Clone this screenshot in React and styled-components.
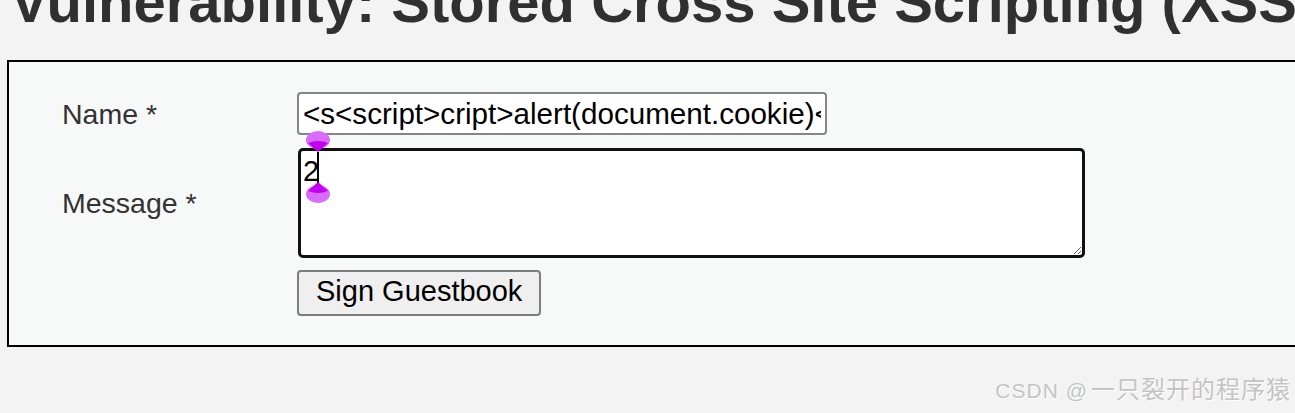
import React from 'react';
import styled, { createGlobalStyle } from 'styled-components';

const GlobalStyle = createGlobalStyle`
html, body {
  margin: 0;
  padding: 0;
  overflow: hidden;
  background-color: #f3f3f3;
  font-family: "Liberation Sans", Arial, sans-serif;
}
`;

const Page = styled.div`
width: 1295px;
height: 413px;
position: relative;
overflow: hidden;
`;

const Title = styled.h1`
margin: -32px 0 0 10px;
font-size: 58px;
font-weight: bold;
line-height: normal;
color: #303030;
white-space: nowrap;
`;

const Panel = styled.div`
width: 1400px;
margin: 25px 0 0 7px;
padding: 30px 0 29px 53px;
border: 2px solid #000;
background-color: #f7f8f8;
display: grid;
grid-template-columns: 235px auto;
row-gap: 12px;
align-items: center;
justify-items: start;
`;

const Label = styled.label`
font-size: 28.5px;
color: #333;
`;

const NameInput = styled.input`
box-sizing: border-box;
width: 530px;
height: 43px;
margin-bottom: 1px;
padding: 0 4px;
border: 2px solid #858585;
border-radius: 4px;
background: #fff;
font-family: "Liberation Sans", Arial, sans-serif;
font-size: 29.6px;
color: #000;
outline: none;
`;

const AreaWrap = styled.div`
position: relative;
margin-left: 1px;
`;

const MessageArea = styled.textarea`
box-sizing: border-box;
display: block;
width: 787px;
height: 110px;
padding: 4px 2px;
border: 3px solid #111;
border-radius: 5px;
background: #fff;
font-family: "Liberation Sans", Arial, sans-serif;
font-size: 29px;
color: #000;
outline: none;
resize: both;
`;

const Caret = styled.div`
position: absolute;
left: 19px;
top: 4px;
width: 2px;
height: 33px;
background: #000;
`;

const Handle = styled.svg`
position: absolute;
left: 8px;
top: ${props => props.top}px;
`;

const Spacer = styled.div``;

const SignButton = styled.button`
box-sizing: border-box;
height: 46px;
padding: 3px 17px 6px;
border: 2px solid #7d7d7d;
border-radius: 4px;
background-color: #efefef;
font-family: "Liberation Sans", Arial, sans-serif;
font-size: 29px;
color: #000;
`;

const Watermark = styled.div`
position: absolute;
right: 4px;
bottom: 8px;
color: #c4c4c4;
text-shadow: 1px 1px 0 rgba(255, 255, 255, 0.9);
white-space: nowrap;
`;

const MarkLatin = styled.span`
font-family: "Liberation Sans", Arial, sans-serif;
font-size: 21px;
letter-spacing: 1px;
margin-right: 3px;
`;

const MarkCjk = styled.span`
font-family: "Noto Sans CJK SC", sans-serif;
font-size: 24px;
letter-spacing: 1px;
`;

const SelectionHandle = ({ top, up }) => (
  <Handle top={top} width="24" height="21" viewBox="0 0 24 21">
    {up
      ? (
        <>
          <ellipse cx="12" cy="12" rx="12" ry="9" fill="#d96bff" />
          <path d="M12 0 L22 9 Q12 13 2 9 Z" fill="#c400f0" />
        </>
      )
      : (
        <>
          <ellipse cx="12" cy="9" rx="12" ry="9" fill="#d96bff" />
          <path d="M2 12 Q12 8 22 12 L12 21 Z" fill="#c400f0" />
        </>
      )}
  </Handle>
);

const App = () => (
  <Page>
    <GlobalStyle />
    <Title>Vulnerability: Stored Cross Site Scripting (XSS)</Title>
    <Panel>
      <Label>Name *</Label>
      <NameInput defaultValue="<s<script>cript>alert(document.cookie)</script>" />
      <Label>Message *</Label>
      <AreaWrap>
        <MessageArea defaultValue="2" />
        <Caret />
        <SelectionHandle top={-17} />
        <SelectionHandle top={34} up />
      </AreaWrap>
      <Spacer />
      <SignButton>Sign Guestbook</SignButton>
    </Panel>
    <Watermark>
      <MarkLatin>CSDN @</MarkLatin>
      <MarkCjk>一只裂开的程序猿</MarkCjk>
    </Watermark>
  </Page>
);

export default App;
